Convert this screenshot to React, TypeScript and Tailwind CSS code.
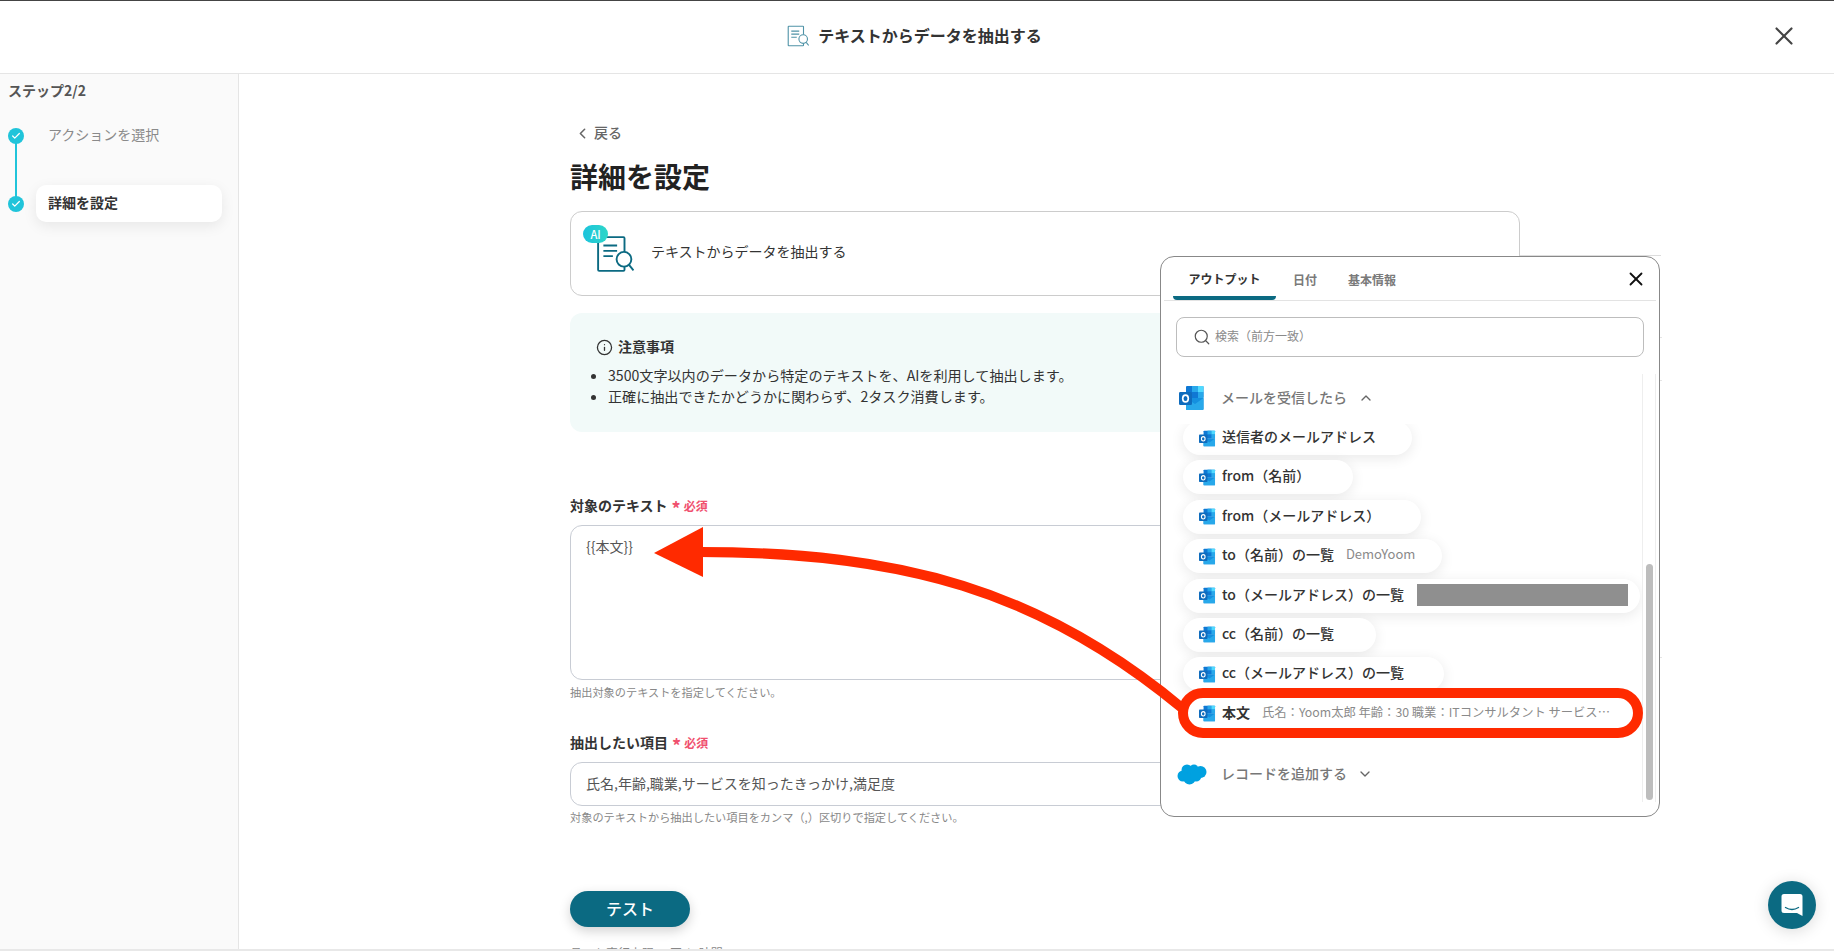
import { Check, ChevronDown, ChevronLeft, ChevronUp, Info, Search, X } from "lucide-react"

const OutlookIcon = ({ className }: { className: string }) => (
  <svg viewBox="0 0 26 26" className={className}>
    <rect x="7" y="1" width="17.5" height="12" rx="1" fill="#0f78d4" />
    <rect x="13" y="1" width="6" height="6" fill="#28a8ea" />
    <rect x="19" y="1" width="5.5" height="6" fill="#50d9ff" />
    <rect x="13" y="7" width="6" height="6" fill="#0f78d4" />
    <rect x="19" y="7" width="5.5" height="6" fill="#28a8ea" />
    <path d="M7 13h17.5v11a1 1 0 0 1-1 1H8a1 1 0 0 1-1-1z" fill="#1490df" />
    <path d="M7 13l9 6 8.5-6v11a1 1 0 0 1-1 1H8a1 1 0 0 1-1-1z" fill="#28a8ea" />
    <rect x="0" y="7" width="13" height="13" rx="1.2" fill="#0f6cbd" />
    <ellipse cx="6.5" cy="13.5" rx="2.8" ry="3.4" fill="none" stroke="#fff" strokeWidth="1.7" />
  </svg>
)

const SalesforceIcon = () => (
  <svg viewBox="0 0 30 22" className="h-[22px] w-[30px] shrink-0" fill="#00a1e0">
    <circle cx="10" cy="7" r="5.5" />
    <circle cx="17" cy="6" r="4.5" />
    <circle cx="23.5" cy="9" r="6" />
    <circle cx="6" cy="13" r="5.5" />
    <circle cx="12.5" cy="15.5" r="6" />
    <circle cx="19" cy="13" r="5.5" />
  </svg>
)

const DocumentIcon = ({ className, stroke }: { className: string; stroke: string }) => (
  <svg viewBox="0 0 36 36" className={className} fill="none" stroke={stroke} strokeWidth="1.8">
    <path d="M27 16V3a1 1 0 0 0-1-1H3a1 1 0 0 0-1 1v30a1 1 0 0 0 1 1h23a1 1 0 0 0 1-1v-3" />
    <path d="M7 10h13M7 15h13M7 20h9" />
    <circle cx="26.5" cy="23" r="7" fill="#fff" />
    <path d="M31.5 28.5l4 5" />
  </svg>
)

const rows = [
  { label: "from（名前）", width: "w-[170px]" },
  { label: "from（メールアドレス）", width: "w-[238px]" },
  { label: "to（名前）の一覧", width: "w-[259px]", value: "DemoYoom" },
  { label: "to（メールアドレス）の一覧", width: "w-[457px]", masked: true },
  { label: "cc（名前）の一覧", width: "w-[193px]" },
  { label: "cc（メールアドレス）の一覧", width: "w-[261px]" },
]

const OutputPill = ({
  label,
  width,
  value,
  masked,
}: {
  label: string
  width: string
  value?: string
  masked?: boolean
}) => (
  <div
    className={`flex h-[34px] shrink-0 items-center rounded-full bg-white pl-4 shadow-[0_3px_14px_rgba(0,0,0,0.09)] ${width}`}
  >
    <OutlookIcon className="mr-[6px] h-[17px] w-[17px] shrink-0" />
    <span className="mb-1 whitespace-nowrap text-sm font-medium text-[#333]">{label}</span>
    {value && <span className="mb-1 ml-[12px] whitespace-nowrap text-[13px] text-[#8a8a8a]">{value}</span>}
    {masked && <span className="mb-[2px] ml-[13px] h-[22px] w-[211px] bg-[#8f8f8f]" />}
  </div>
)

const RequiredMark = () => (
  <span className="ml-[4px] mt-[1px] flex items-center text-xs font-bold text-[#f0506e]">
    <span className="mt-[4px] mr-[3px] text-lg leading-none">*</span>
    必須
  </span>
)

const OutputPopover = () => (
  <div className="absolute top-[256px] left-[1160px] flex h-[561px] w-[500px] flex-col rounded-[14px] border border-[#888] bg-white">
    <div className="mx-[3px] flex h-[44px] shrink-0 items-end border-b border-[#e3e3e3] pl-[9px]">
      <div className="flex h-[44px] w-[103px] items-center justify-center rounded-b-[4px] border-b-4 border-[#0b6a82] pt-[6px] text-xs font-bold text-[#333]">
        アウトプット
      </div>
      <div className="ml-[17px] flex h-[44px] items-center pt-[3px] text-xs font-bold text-[#7a7a7a]">日付</div>
      <div className="ml-[31px] flex h-[44px] items-center pt-[3px] text-xs font-bold text-[#7a7a7a]">基本情報</div>
      <X className="mb-[10px] ml-auto mr-[9px] h-[22px] w-[22px] text-[#111]" strokeWidth={2} />
    </div>
    <div className="mx-[15px] mt-[16px] flex h-[40px] shrink-0 items-center rounded-lg border border-[#bdbdbd] pl-[16px]">
      <Search className="h-[18px] w-[18px] text-[#555]" strokeWidth={1.6} />
      <span className="mb-[2px] ml-[4px] text-xs text-[#8a8a8a]">検索（前方一致）</span>
    </div>
    <div className="mt-[17px] flex min-h-0 flex-1">
      <div className="min-w-0 flex-1">
        <div className="flex h-[50px] items-center pb-[2px] pl-[18px]">
          <OutlookIcon className="mr-[16px] h-[26px] w-[26px] shrink-0" />
          <span className="mb-[2px] text-sm font-medium text-[#777]">メールを受信したら</span>
          <ChevronUp className="ml-[11px] h-4 w-4 text-[#666]" strokeWidth={2} />
        </div>
        <div className="h-[322px] overflow-hidden">
          <div className="-mt-[3px] flex flex-col gap-[5.4px] pb-4 pl-[22px]">
            <OutputPill label="送信者のメールアドレス" width="w-[229px]" />
            {rows.map((row) => (
              <OutputPill key={row.label} {...row} />
            ))}
            <div className="flex h-[34px] w-[456px] shrink-0 items-center rounded-full bg-white pl-4">
              <OutlookIcon className="mr-[6px] h-[17px] w-[17px] shrink-0" />
              <span className="mb-1 text-sm font-bold text-[#333]">本文</span>
              <span className="mb-1 ml-3 w-[356px] truncate text-[12.3px] text-[#8a8a8a]">
                氏名：Yoom太郎 年齢：30 職業：ITコンサルタント サービスを知ったきっかけ
              </span>
            </div>
          </div>
        </div>
        <div className="mt-[8px] flex h-[40px] items-center pl-[16px]">
          <SalesforceIcon />
          <span className="mb-[2px] ml-[14px] text-sm font-medium text-[#777]">レコードを追加する</span>
          <ChevronDown className="ml-[10px] h-4 w-4 text-[#666]" strokeWidth={2} />
        </div>
      </div>
      <div className="mb-[14px] mr-[3px] flex w-[14px] shrink-0 flex-col border-x border-[#eeeeee] px-[2.5px] pb-[2px] pt-[190px]">
        <div className="flex-1 rounded-full bg-[#bdbdbd]" />
      </div>
    </div>
  </div>
)

const App = () => {
  return (
    <div
      className="relative flex h-[951px] w-[1834px] flex-col overflow-hidden border-b-2 border-[#e8e8e8] bg-white text-[#333]"
      style={{ fontFamily: '"Noto Sans CJK JP", "Noto Sans", sans-serif' }}
    >
      {/* header */}
      <header className="relative flex h-[74px] shrink-0 items-center justify-center border-t border-b border-t-[#444] border-b-[#e5e5e5] pb-[2px] pr-[5px]">
        <DocumentIcon className="mr-[9px] h-[22px] w-[22px]" stroke="#4f93a7" />
        <span className="mb-[2px] text-base font-bold text-[#333]">テキストからデータを抽出する</span>
        <X className="absolute top-[20px] right-[35px] h-[30px] w-[30px] text-[#444]" strokeWidth={1.7} />
      </header>

      <div className="flex min-h-0 flex-1">
        {/* steps */}
        <aside className="w-[239px] shrink-0 border-r border-[#e5e5e5] bg-[#fafafa] pt-[6px]">
          <div className="pl-2 text-sm font-bold leading-5 text-[#555]">ステップ2/2</div>
          <div className="relative mt-[17px]">
            <div className="absolute top-[20px] left-[15px] h-[60px] w-[2px] bg-[#20c4da]" />
            <div className="relative flex h-[37px] items-center pl-2">
              <span className="flex h-4 w-4 items-center justify-center rounded-full bg-[#20c4da]">
                <Check className="h-[10px] w-[10px] text-white" strokeWidth={3} />
              </span>
              <span className="mb-1 ml-6 text-sm text-[#8a8a8a]">アクションを選択</span>
            </div>
            <div className="relative mt-[31px] flex h-[37px] items-center pl-2">
              <span className="flex h-4 w-4 items-center justify-center rounded-full bg-[#20c4da]">
                <Check className="h-[10px] w-[10px] text-white" strokeWidth={3} />
              </span>
              <span className="ml-3 flex h-[37px] w-[186px] items-center rounded-[10px] bg-white pb-1 pl-3 text-sm font-bold text-[#333] shadow-[0_4px_14px_rgba(0,0,0,0.08)]">
                詳細を設定
              </span>
            </div>
          </div>
        </aside>

        {/* form */}
        <main className="ml-[331px] w-[950px] shrink-0 pt-[49px]">
          <div className="flex h-5 items-center text-sm font-medium text-[#666]">
            <ChevronLeft className="ml-[4px] mr-[3px] h-[17px] w-[17px]" strokeWidth={2.2} />
            <span className="mb-[2px]">戻る</span>
          </div>
          <h1 className="mt-[13px] mb-[15px] text-[28px] leading-10 font-bold text-[#222]">詳細を設定</h1>

          <div className="flex h-[85px] items-start rounded-xl border border-[#ccc] pl-[12px] pt-[13px]">
            <div className="relative h-[46px] w-[50px] shrink-0">
              <DocumentIcon className="absolute top-[10px] left-[13px] h-[38px] w-[38px]" stroke="#0b6a82" />
              <span className="absolute top-0 left-0 flex h-[18px] w-[25px] items-center justify-center rounded-full bg-gradient-to-r from-[#1cc3dc] to-[#2ed6c8] text-[11px] font-medium text-white">
                AI
              </span>
            </div>
            <span className="ml-[18px] mt-[16px] text-sm text-[#333]">テキストからデータを抽出する</span>
          </div>

          <div className="mt-[17px] h-[119px] rounded-xl bg-[#f2faf9] pt-[24px]">
            <div className="flex h-5 items-center pl-[26px] text-sm font-bold text-[#333]">
              <Info className="mr-[5px] h-[17px] w-[17px]" strokeWidth={1.8} />
              <span className="mb-[2px]">注意事項</span>
            </div>
            <ul className="mt-[8px] list-disc pl-[38px] text-[14.1px] leading-[21px] text-[#333]">
              <li>3500文字以内のデータから特定のテキストを、AIを利用して抽出します。</li>
              <li>正確に抽出できたかどうかに関わらず、2タスク消費します。</li>
            </ul>
          </div>

          <div className="mt-[63px] mb-[10px] flex h-5 items-center text-sm font-bold text-[#333]">
            対象のテキスト
            <RequiredMark />
          </div>
          <div className="h-[155px] rounded-xl border border-[#c8ccd4] px-[15px] py-[10px] text-sm text-[#555]">
            {"{{本文}}"}
          </div>
          <p className="mt-[4px] text-[11.2px] leading-4 text-[#888]">抽出対象のテキストを指定してください。</p>

          <div className="mt-[32px] mb-[10px] flex h-5 items-center text-sm font-bold text-[#333]">
            抽出したい項目
            <RequiredMark />
          </div>
          <div className="flex h-[44px] items-center rounded-xl border border-[#c8ccd4] px-[15px] pb-[2px] text-sm text-[#555]">
            氏名,年齢,職業,サービスを知ったきっかけ,満足度
          </div>
          <p className="mt-[3px] text-[11.2px] leading-4 text-[#888]">
            対象のテキストから抽出したい項目をカンマ（,）区切りで指定してください。
          </p>

          <button className="mt-[66px] flex h-[36px] w-[120px] items-center justify-center rounded-full bg-[#0b6a82] pb-[2px] text-base font-medium text-white shadow-[0_4px_12px_rgba(0,0,0,0.18)]">
            テスト
          </button>
          <p className="mt-[18px] text-xs leading-4 text-[#888]">テスト実行上限 10回 / 1時間</p>
        </main>
      </div>

      <OutputPopover />

      {/* leftovers of the page peeking out past the popover */}
      <div className="absolute top-[255px] left-[1520px] h-px w-[141px] bg-[#dddddd]" />
      <div className="absolute top-[337px] left-[1660px] h-px w-[2px] bg-[#e5e5e5]" />
      <div className="absolute top-[380px] left-[1660px] h-px w-[2px] bg-[#e5e5e5]" />
      <div className="absolute top-[657px] left-[1660px] h-px w-[2px] bg-[#e5e5e5]" />

      {/* red annotation over the page */}
      <div className="absolute top-[688px] left-[1178px] h-[50px] w-[465px] rounded-full border-[10px] border-[#ff2a00]" />
      <svg className="pointer-events-none absolute top-0 left-0 h-[951px] w-[1834px]" viewBox="0 0 1834 951">
        <path d="M1182 708C1040 590 900 552 700 552" fill="none" stroke="#ff2a00" strokeWidth="10" />
        <path d="M654 553L703 527V577Z" fill="#ff2a00" />
      </svg>

      {/* chat launcher */}
      <div className="absolute top-[881px] left-[1768px] flex h-12 w-12 items-center justify-center rounded-full bg-[#0b6a82] shadow-[0_2px_16px_rgba(0,0,0,0.15)]">
        <svg viewBox="0 0 22 24" className="h-[24px] w-[22px]">
          <path d="M3 1h16a2.5 2.5 0 0 1 2.5 2.5V23l-5.5-3H3a2.5 2.5 0 0 1-2.5-2.5v-14A2.5 2.5 0 0 1 3 1z" fill="#fff" />
          <path d="M4.5 14.5c4 2.4 9 2.4 13 0" fill="none" stroke="#0b6a82" strokeWidth="1.4" strokeLinecap="round" />
        </svg>
      </div>
    </div>
  )
}

export default App
